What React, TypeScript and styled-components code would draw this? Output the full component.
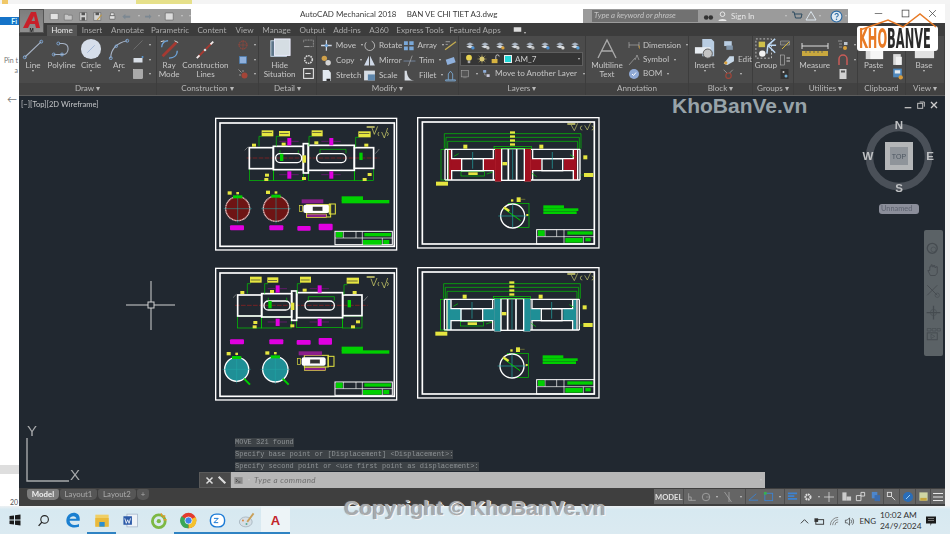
import React from "react";
import styled, { createGlobalStyle } from "styled-components";

const Global = createGlobalStyle`
  html, body { margin: 0; padding: 0; background: #f0f0f0; }
  * { box-sizing: border-box; }
`;
const UI = `Lato, Roboto, "Liberation Sans", sans-serif`;

const Root = styled.div`
  position: relative; width: 950px; height: 534px; overflow: hidden; display: flex; flex-direction: column;
  background: #f1f1f1; font-family: ${UI};
`;
const TopStrip = styled.div`
  height: 4px; display: flex; background: #f4f4f4;
`;
const TopFolder = styled.span`width: 6px; height: 4px; margin-left: 2px; background: #f0c868;`;
const TopMark = styled.span`width: 56px; height: 4px; margin-left: 128px; background: #e6e08a;`;
const Middle = styled.div`height: 502px; display: flex;`;
const LeftStrip = styled.div`
  width: 19px; display: flex; flex-direction: column; background: #fff; color: #666; font-size: 7px; padding-top: 13px;
`;
const FileTab = styled.div`
  height: 8px; background: #1573c8; color: #dff; font-weight: 700; line-height: 8px; font-size: 7px; text-align: right; padding-right: 2px;
`;
const PinText = styled.div`margin-top: 30px; line-height: 10px; text-align: right; padding-right: 1px; color: #777; height: 20px;`;
const BackArrow = styled.div`margin-top: 18px; padding-left: 7px; height: 12px; color: #777; font-size: 10px; line-height: 12px;`;
const LeftSelected = styled.div`margin-top: 360px; height: 11px; background: #dedede;`;
const LeftYear = styled.div`margin-top: 24px; text-align: right; padding-right: 1px; color: #555; font-size: 7px; line-height: 8px;`;
const RightStrip = styled.div`flex: 1; background: #f3f3f3;`;

const AppWindow = styled.div`
  position: relative; width: 926px; display: flex; flex-direction: column; background: #3f3f3f;
  filter: blur(0.35px);
`;
const TitleBar = styled.div`
  height: 19px; background: #fff; display: flex; padding-top: 5px; color: #333;
`;
const QuickBar = styled.div`
  margin-left: 25px; width: 147px; height: 14px; background: #999; display: flex; align-items: center; gap: 4px; padding-left: 5px;
`;
const TitleText = styled.div`
  margin-left: 109px; width: 283px; font-size: 8px; line-height: 11px; white-space: pre; color: #3a3a3a;
`;
const InfoCenter = styled.div`
  width: 265px; height: 14px; background: #9b9b9b; display: flex; align-items: center; color: #e6e6e6; font-size: 8px;
`;
const SearchBox = styled.div`
  margin-left: 9px; width: 106px; height: 12px; background: #717171; color: #c4c4c4; font-style: italic; padding-left: 2px; line-height: 11px; font-size: 7.8px; white-space: nowrap;
`;
const InfoItem = styled.span<{ $ml?: number }>`
  margin-left: ${(p) => p.$ml ?? 4}px; display: inline-flex; align-items: center; flex: none; white-space: nowrap;
`;
const WindowButtons = styled.div`
  flex: 1; display: flex; justify-content: flex-end; gap: 18px; padding: 0 8px 0 0; color: #444; align-items: flex-start;
`;
const AppButton = styled.div`
  position: absolute; left: 0; top: 5px; width: 25px; height: 24px; background: linear-gradient(#7d7d7d, #8f8f8f); border: 1px solid #555;
  display: flex; flex-direction: column; align-items: center; justify-content: flex-start;
  svg { margin-top: 1px; }
  span { font: 700 5px/4px "Liberation Sans", sans-serif; color: #222; }
`;
const TabRow = styled.div`
  height: 13px; background: #3c3c3c; display: flex; padding-left: 28px; align-items: flex-end;
`;
const Tab = styled.div<{ $active?: boolean; $w: number }>`
  width: ${(p) => p.$w}px; height: 11px; line-height: 10px; font-size: 8.1px; text-align: center; white-space: nowrap;
  color: ${(p) => (p.$active ? "#e8e8e8" : "#a9a9a9")}; background: ${(p) => (p.$active ? "#555" : "transparent")};
`;
const Ribbon = styled.div`
  height: 60px; display: flex; background: #4b4b4b; border-bottom: 1px solid #5c5c5c;
`;
const Panel = styled.div<{ $w: number }>`
  width: ${(p) => p.$w}px; display: flex; flex-direction: column; border-right: 1px solid #3d3d3d;
`;
const PanelBody = styled.div`
  flex: 1; display: flex; padding-top: 2px; color: #c6c6c6; font-size: 8.1px; line-height: 9px;
`;
const PanelTitle = styled.div`
  height: 12px; background: #424242; color: #b8b8b8; font-size: 8.1px; line-height: 11px; text-align: center; white-space: nowrap;
`;
const Large = styled.div<{ $w: number }>`
  width: ${(p) => p.$w}px; display: flex; flex-direction: column; align-items: center; text-align: center; white-space: pre-line; color: #c6c6c6;
  svg { margin-bottom: 1px; flex: none; }
`;
const Dot = styled.span`
  display: block; margin: 0 auto; border-top: 2px solid #c8c8c8; border-left: 1.5px solid transparent; border-right: 1.5px solid transparent; height: 0; width: 0;
`;
const SmallCol = styled.div<{ $w?: number; $ml?: number }>`
  width: ${(p) => p.$w ?? 22}px; margin-left: ${(p) => p.$ml ?? 0}px; display: flex; flex-direction: column;
`;
const SmallRow = styled.div<{ $gap?: number }>`
  height: 14.4px; display: flex; align-items: center; gap: ${(p) => p.$gap ?? 3}px; white-space: nowrap; color: #c6c6c6;
`;
const Caret = styled.span`
  display: inline-block; width: 0; height: 0; border-top: 2px solid #c8c8c8; border-left: 1.5px solid transparent; border-right: 1.5px solid transparent; margin-left: 2px;
`;
const ModifyGrid = styled.div`
  display: grid; grid-template-columns: 43px 40px 41px 14px; padding-left: 3px;
`;
const LayersBox = styled.div`
  padding: 0 0 0 1px; display: flex; flex-direction: column; width: 100%;
`;
const LayerIcons = styled.div`
  height: 14.4px; display: flex; gap: 5px; padding-left: 5px; align-items: center;
`;
const Combo = styled.div`
  height: 14px; width: 123px; background: #353535; border: 1px solid #5f5f5f; display: flex; align-items: center; gap: 3px; padding: 0 2px 0 3px; color: #cdcdcd; font-size: 8.1px;
`;
const Swatch = styled.span`width: 8px; height: 8px; background: #22d7d7; border: 1px solid #eee; margin-left: 1px;`;
const ComboText = styled.span`flex: 1;`;

const Viewport = styled.div`
  position: relative; height: 392px; background: #212830; overflow: hidden;
`;
const Canvas = styled.svg`
  position: absolute; left: 0; top: 0; width: 926px; height: 392px; fill: none;
`;
const VpLabel = styled.div`
  position: absolute; left: 2px; top: 3px; color: #c4c6c8; font-size: 7.6px; line-height: 10px;
`;
const VpControls = styled.div`
  position: absolute; right: 7px; top: 5px; display: flex; gap: 5px;
`;
const Pill = styled.div`
  position: absolute; left: 860px; top: 108px; width: 40px; height: 10px; border-radius: 3px; background: #8b8e9a; color: #5e6370; font-size: 7.4px; line-height: 9px; padding-left: 2px;
`;
const NavBar = styled.div`
  position: absolute; left: 905px; top: 134px; width: 19px; height: 126px; background: #5b6266; border-radius: 2px; display: flex; flex-direction: column; align-items: center; padding-top: 12px; gap: 6px;
`;
const History = styled.div`
  position: absolute; left: 216px; top: 342px; display: flex; flex-direction: column; gap: 3px; align-items: flex-start;
  font: 7px/9px "Liberation Mono", monospace; color: #8d9295;
`;
const HistoryLine = styled.span`
  background: #3d4246; height: 9px; white-space: pre;
`;
const CommandBar = styled.div`
  position: absolute; left: 180px; bottom: 0; width: 566px; height: 16px; display: flex; background: #b7b7b7;
`;
const CommandHandle = styled.div`
  width: 32px; background: #4a4a4a; border: 1px solid #5a5a5a; display: flex; align-items: center; justify-content: flex-end; gap: 3px; padding-right: 3px; color: #ddd;
`;
const CommandInput = styled.div`
  flex: 1; display: flex; align-items: center; padding: 0 3px; gap: 3px; color: #6d6d6d; font-style: italic; font-size: 8px;
`;
const CommandText = styled.span`flex: 1; margin-left: 1px; letter-spacing: .4px;`;

const StatusRow = styled.div`
  flex: 1; display: flex; background: #3f3f3f; align-items: flex-start; padding-top: 1px;
`;
const LayoutTabs = styled.div`
  padding-left: 8px; display: flex; gap: 1px; width: 635px;
`;
const LayoutTab = styled.div<{ $active?: boolean; $w: number }>`
  width: ${(p) => p.$w}px; height: 11px; line-height: 10px; text-align: center; font-size: 7.8px; border-radius: 2px 2px 5px 5px;
  background: ${(p) => (p.$active ? "#7d7d7d" : "#565656")}; color: ${(p) => (p.$active ? "#f0f0f0" : "#aaa")}; font-weight: ${(p) => (p.$active ? 700 : 400)};
`;
const StatusCluster = styled.div`
  width: 291px; height: 15px; display: flex; gap: 1px; background: #4e4e4e;
`;
const StatusGroup = styled.div<{ $w: number }>`
  width: ${(p) => p.$w}px; background: #656565; display: flex; align-items: center; justify-content: space-around; padding: 0 1px; color: #e0e0e0; font-size: 7.6px; font-weight: 700;
`;
const Taskbar = styled.div`
  height: 28px; display: flex; background: linear-gradient(#edf1f3, #d7e9f1 12%, #dbeaf1);
`;
const TaskItem = styled.div<{ $active?: boolean; $open?: boolean }>`
  width: 29px; height: 100%; display: flex; align-items: center; justify-content: center; padding-top: 2px;
  background: ${(p) => (p.$active ? "#edf4f7" : "transparent")}; border-bottom: 2px solid ${(p) => (p.$open ? "#2f83c3" : "transparent")};
  color: #c3242b; font: 700 13px "Liberation Sans", sans-serif;
`;
const Tray = styled.div`
  margin-left: auto; display: flex; align-items: center; gap: 4px; padding-right: 13px; color: #333; font-size: 8px; padding-top: 2px;
`;
const Clock = styled.div`
  width: 36px; margin: 0 5px 0 0; line-height: 11px; text-align: center; font-size: 8.4px; white-space: nowrap;
`;
const SiteMark = styled.div`
  position: absolute; left: 672px; top: 94px; font: 700 21px/23px "Liberation Sans", sans-serif; color: #98a3a9; white-space: nowrap;
`;
const Copyright = styled.div`
  position: absolute; left: 344px; top: 496px; font: 700 21px/23px "Liberation Sans", sans-serif; color: #a8aaac; white-space: nowrap; text-shadow: 1px 1px 0 #f4f4f4, -.5px 0 1px #8a8a8a;
`;
const Logo = styled.div`
  position: absolute; left: 857px; top: 12px; width: 82px; height: 38px;
`;
const Roof = styled.svg`
  position: absolute; left: 0; top: 0; width: 82px; height: 20px; z-index: 1;
`;
const LogoPlate = styled.div`
  position: absolute; left: 0; top: 14px; width: 81px; height: 25px; background: #fff; border-radius: 3px;
`;
const LogoWord = styled.div`
  width: 160px; white-space: nowrap; transform: scaleX(.47); transform-origin: left top; margin-left: 2px;
  font: 700 27px/25px "DejaVu Sans Condensed", "DejaVu Sans", sans-serif;
`;
const LogoSpan = styled.span<{ $c: string }>`color: ${(p) => p.$c};`;

/* ---------- icons ---------- */
const S = ({ s = 12, v = 24, children }: { s?: number; v?: number; children: React.ReactNode }) => (
  <svg width={s} height={s} viewBox={`0 0 ${v} ${v}`} fill="none">{children}</svg>
);
const BL = "#a8b4c6";
const LineIc = () => <S s={22}><path d="M3 21 21 4" stroke={BL} strokeWidth="1.2"/><circle cx="3" cy="21" r="1.6" stroke="#7fa9d8"/><circle cx="21" cy="4" r="1.6" stroke="#7fa9d8"/></S>;
const PolyIc = () => <S s={22}><path d="M3 18H13C20 18 21 6 13 6H9" stroke={BL} strokeWidth="1.2"/><circle cx="3" cy="18" r="1.6" stroke="#7fa9d8"/><circle cx="12" cy="18" r="1.6" stroke="#7fa9d8"/><circle cx="8" cy="6" r="1.6" stroke="#7fa9d8"/></S>;
const CircleIc = () => <S s={22}><circle cx="12" cy="12" r="11" fill="#d6deea"/><path d="M8 16 16 8" stroke="#9cb4d4"/></S>;
const ArcIc = () => <S s={22}><path d="M3 22C3 12 10 5 21 3" stroke={BL} strokeWidth="1.2"/><circle cx="3" cy="22" r="1.6" stroke="#7fa9d8"/><circle cx="9" cy="9" r="1.4" stroke="#7fa9d8"/><circle cx="21" cy="3" r="1.6" stroke="#7fa9d8"/></S>;
const RayIc = () => <S s={22}><path d="M5 20 20 5" stroke="#a53a32" strokeWidth="3"/><path d="M4 10C4 5 8 3 11 3M21 14C21 20 16 22 12 22" stroke="#6ea4da" strokeWidth="1.4"/><path d="M3 4 7 3M18 3l4 2" stroke="#e2e2e2"/></S>;
const ConsIc = () => <S s={22}><path d="M4 21 20 5" stroke="#a53a32" strokeWidth="2"/><path d="M3 22 6 19M18 7l3-3" stroke="#eee" strokeWidth="2"/><circle cx="12" cy="13" r="1.4" fill="#ddd"/></S>;
const HideIc = () => <S s={22}><rect x="2" y="3" width="17" height="17" fill="#5e7689" stroke="#c9dbe8"/><rect x="6" y="1" width="17" height="18" fill="#d5dde3" stroke="#eef"/></S>;
const InsertIc = () => <S s={22}><path d="M9 1h10l3 3v16H9z" fill="#b9cde2"/><rect x="1" y="10" width="17" height="7" fill="#e7ecf1"/><circle cx="15" cy="17" r="5" fill="#c4c4c4" stroke="#555"/></S>;
const GroupIc = () => <S s={22}><rect x="1" y="1" width="17" height="21" stroke="#c8c8c8" strokeDasharray="2 2"/><rect x="4" y="4" width="7" height="6" fill="#cfc04a"/><path d="M14 8 22 1M14 8l9 0M14 8 22 16M14 8l-1 9" stroke="#bcd8f4" strokeWidth="1.6"/><circle cx="8" cy="17" r="3.5" fill="#f2f2f2"/></S>;
const MeasureIc = () => <svg width="30" height="22" viewBox="0 0 30 22" fill="none"><path d="M2 8h26M2 5v6M28 5v6" stroke="#ddd"/><rect x="2" y="13" width="26" height="5" fill="#c9a83e"/><path d="M6 13v2M10 13v2M14 13v2M18 13v2M22 13v2" stroke="#665"/></svg>;
const PasteIc = () => <S s={22}><rect x="3" y="3" width="16" height="20" fill="#d8d8d8"/><rect x="8" y="6" width="14" height="17" fill="#f6f6f6"/></S>;
const BaseIc = () => <S s={22}><rect x="2" y="3" width="21" height="19" fill="#e2e2e2"/></S>;
const MTextIc = () => <svg width="24" height="22" viewBox="0 0 24 22" fill="none"><path d="M3 20 12 2l9 18M6.5 13h11" stroke="#ababab" strokeWidth="1.3"/></svg>;
const AcadLogo = () => <svg width="18" height="17" viewBox="0 0 18 17"><path d="M0 17 8 1h5l4 16h-4l-1-4H7l-2 4zM8.5 10H12l-1-5z" fill="#c8202a"/></svg>;

const sm = {
  line: <S><path d="M3 21 21 3" stroke="#8d8d8d"/></S>,
  rect: <S><rect x="3" y="8" width="18" height="9" fill="#d8dee6"/><circle cx="21" cy="6" r="2" fill="#5c9ad6"/></S>,
  hatch: <S><rect x="3" y="3" width="18" height="18" fill="#a9a9a9" stroke="#d5d5d5"/></S>,
  blue: <S><rect x="5" y="5" width="14" height="14" fill="#8fb0dc" stroke="#3d7fc0"/></S>,
  red: <S><circle cx="12" cy="12" r="8" stroke="#a44538" strokeWidth="2" strokeDasharray="3 1"/><path d="M3 12h18M12 3v18" stroke="#a44538"/></S>,
  redDot: <S><circle cx="15" cy="15" r="6" fill="#a44538"/><path d="M3 3l6 6M4 14h4M12 4v4" stroke="#ddd"/></S>,
  rotate: <S s={13}><path d="M6 6a9 9 0 1 0 10-2" stroke="#d4d4d4" strokeWidth="1.4"/></S>,
  move: <S s={13}><path d="M12 2v20M2 12h20" stroke="#cfd8e6" strokeWidth="2.4"/><circle cx="12" cy="12" r="3" fill="#6ea4da"/></S>,
  copy: <S s={13}><circle cx="8" cy="8" r="5" fill="#cfa04a"/><circle cx="15" cy="16" r="5" fill="#d5d5d5"/></S>,
  mirror: <S s={13}><path d="M11 3v18H2zM13 3v18h9z" fill="#cfd8e6"/></S>,
  stretch: <S s={13}><path d="M5 2h11l4 5v15H5z" fill="#e2e8ef"/><path d="M12 18h7v4h-7z" fill="#222"/></S>,
  scale: <S s={13}><rect x="2" y="3" width="20" height="18" fill="#d6dde5"/><rect x="9" y="10" width="13" height="11" fill="#5d86ac"/></S>,
  array: <S s={13}><path d="M2 3h8v8H2zM13 3h9v8h-9zM2 14h8v8H2zM13 14h9v8h-9z" fill="#7aa8d8"/></S>,
  trim: <S s={13}><path d="M1 13h22" stroke="#8fb0dc"/><path d="M10 22 17 3" stroke="#c9c9c9"/></S>,
  fillet: <S s={13}><path d="M3 3v18h18C12 21 7 12 7 3z" fill="#d8dde4"/></S>,
  pen: <S s={13}><path d="M2 20 22 5" stroke="#c5ad50" strokeWidth="2.4"/><path d="M3 5h8M3 10h4" stroke="#ddd"/></S>,
  chamfer: <S s={13}><rect x="4" y="8" width="16" height="10" fill="#8fb0dc" transform="rotate(-18 12 12)"/></S>,
  base: <S s={13}><path d="M3 20h18v2H3zM8 20V9l4-5 4 5v11" stroke="#7fb0de" strokeWidth="1.5"/></S>,
  stack: (c: string) => <S s={10}><path d="M3 16l9-4 9 4-9 4z" fill="#d7dde4"/><path d="M3 10l9-4 9 4-9 4z" fill="#a9b4c2"/><circle cx="19" cy="19" r="4" fill={c}/></S>,
  square: <S s={14}><rect x="3" y="4" width="18" height="15" fill="#555" stroke="#aaa" strokeWidth="1.4"/><path d="M8 21h8" stroke="#aaa"/></S>,
  moveLayer: <S s={13}><rect x="3" y="3" width="8" height="7" fill="#8fb0dc"/><rect x="12" y="14" width="8" height="7" fill="#ccd"/><path d="M7 10v6h5" stroke="#ddd"/></S>,
  dim: <S s={12}><path d="M2 6v12M22 6v12M2 12h20" stroke="#cfcfcf"/><path d="M20 14h3v6" stroke="#d8a030"/></S>,
  sym: <S s={12}><path d="M2 22 14 8" stroke="#ccc"/><path d="M14 12 18 2l4 10" stroke="#ccc"/></S>,
  bom: <S s={12}><circle cx="12" cy="12" r="10" fill="#8fa9d6"/><path d="M8 12l3 3 5-6" stroke="#fff" strokeWidth="2"/></S>,
  block1: <S s={13}><rect x="4" y="4" width="14" height="9" fill="#b9cde2"/><rect x="8" y="12" width="12" height="8" fill="#8296aa"/></S>,
  block2: <S s={13}><path d="M3 20 14 6h8v9L10 22z" fill="#c7d8e8"/><circle cx="7" cy="18" r="3" fill="#d9a13c"/></S>,
  block3: <S s={13}><path d="M3 5l6 6M20 5l-6 6" stroke="#ccc"/><circle cx="12" cy="16" r="5" stroke="#a44538" strokeWidth="2"/></S>,
  grp1: <S s={12}><path d="M3 4h18v8H3z" fill="#585858" stroke="#bbb"/><path d="M6 20 20 6" stroke="#d3b63e" strokeWidth="2"/></S>,
  grp2: <S s={12}><rect x="3" y="2" width="8" height="20" stroke="#cfcfcf"/><path d="M15 8h7M15 14h7" stroke="#cfcfcf" strokeWidth="2"/></S>,
  grp3: <S s={12}><rect x="3" y="2" width="16" height="20" fill="#333"/><circle cx="9" cy="8" r="2" fill="#d3d3d3"/><circle cx="14" cy="16" r="3" fill="#74b1d8"/></S>,
  util1: <S s={12}><path d="M4 10h6M4 16h6M2 4h8" stroke="#ddd"/><path d="M14 6h7v6h-7z" fill="#bdc6d0"/><circle cx="16" cy="18" r="4" fill="#d7a13a"/></S>,
  magnet: <S s={12}><path d="M4 22V10a8 8 0 0 1 16 0v12" stroke="#c95c58" strokeWidth="3"/></S>,
  calc: <S s={12}><rect x="5" y="2" width="14" height="20" fill="#d2d2d2"/><rect x="8" y="5" width="8" height="4" fill="#555"/></S>,
  clip: <S s={13}><rect x="4" y="2" width="14" height="20" fill="#d8d8d8"/><rect x="9" y="7" width="11" height="15" fill="#f0f0f0"/></S>,
  clip2: <S s={13}><rect x="4" y="3" width="16" height="16" fill="#4f88bd"/><rect x="7" y="6" width="10" height="6" fill="#e4eaf0"/><circle cx="18" cy="19" r="4" fill="#d79a3a"/></S>,
  txt: <S s={13}><path d="M3 6V2h18v12h-6" stroke="#cfcfcf" strokeDasharray="2 1"/><path d="M4 14h10" stroke="#eee"/></S>,
  gear: <S s={13}><circle cx="12" cy="12" r="7" stroke="#d4d4d4" strokeWidth="3" strokeDasharray="3 1.5"/></S>,
  lineSq: <S s={13}><rect x="3" y="3" width="18" height="18" stroke="#e6e6e6" strokeWidth="2"/><path d="M6 12h10" stroke="#e6e6e6" strokeWidth="2"/></S>,
};

const Q = (c: React.ReactNode, k: number) => <React.Fragment key={k}>{c}</React.Fragment>;
const quick = [
  <path d="M3 5h18v14H3z" fill="#e2e2e2" stroke="#555"/>,
  <path d="M3 7h7l2 2h9v11H3z" fill="#c6c6c6" stroke="#555"/>,
  <g><path d="M4 3h16v18H4z" fill="#d2d2d2" stroke="#444"/><path d="M8 3h8v6H8zM8 14h8v7H8z" fill="#555"/></g>,
  <g><path d="M4 3h16v18H4z" fill="#d2d2d2" stroke="#444"/><path d="M8 3h8v6H8z" fill="#555"/><path d="M12 20 22 8" stroke="#c89b3a" strokeWidth="2.4"/></g>,
  <path d="M6 10h12v8H6zM8 4h8v6H8z" fill="#e2e2e2" stroke="#444"/>,
  <path d="M3 12 10 6v4h11v5H10v4z" fill="#7c8892"/>,
];

const LARGE = (w: number, icon: React.ReactNode, label: string, caret = true) => (
  <Large $w={w}>{icon}{label}{caret && <Dot />}</Large>
);
const Stack = ({ items, w, ml }: { items: React.ReactNode[]; w?: number; ml?: number }) => (
  <SmallCol $w={w} $ml={ml}>{items.map((it, i) => <SmallRow key={i}>{it}</SmallRow>)}</SmallCol>
);
const Sm = ({ i, t, c = true }: { i: React.ReactNode; t?: string; c?: boolean }) => (
  <SmallRow>{i}{t}{c && <Caret />}</SmallRow>
);

/* ---------- drawings ---------- */
const GR = "#00d000", YE = "#e6e640", WH = "#fff", MA = "#e000e0", CY = "#22a9a9";

const ShaftSheet = ({ dx, dy, shaftX, teal }: { dx: number; dy: number; shaftX: number; teal?: boolean }) => {
  const o = shaftX;
  const fill = teal ? "#1f8f96" : "#6e1414";
  const circY = teal ? 322 : 290;
  const ty = teal ? -8 : 0;
  const circX1 = teal ? 80 : 83, circX2 = teal ? 196 : 198;
  return (
    <g transform={`translate(${dx} ${dy}) scale(.3333)`} fill="none">
      <rect x="17" y="19" width="543" height="395" stroke={WH} strokeWidth="4"/>
      <rect x="30" y="33" width="523" height="370" stroke={WH} strokeWidth="5"/>
      <path d={`M${o - 8} ${138 + ty}H${o + 390}`} stroke="#a02020" strokeWidth="2" strokeDasharray="14 4"/>
      {[[0,170,72,36],[72,173,90,33],[177,175,138,30],[315,170,58,36]].map(([x,y,w,h],i)=>(
        <rect key={i} x={o+x} y={y+ty} width={w} height={h} stroke={GR} strokeWidth="2"/>
      ))}
      {[[0,107,72,63],[72,103,90,70],[162,95,15,88],[177,100,138,75],[315,107,58,62]].map(([x,y,w,h],i)=>(
        <rect key={i} x={o+x} y={y+ty} width={w} height={h} stroke={WH} strokeWidth="5"/>
      ))}
      <rect x={o+79} y={125+ty} width="78" height="27" rx="13" stroke={WH} strokeWidth="4"/>
      <rect x={o+202} y={125+ty} width="88" height="27" rx="13" stroke={WH} strokeWidth="4"/>
      <path d={`M${o+92} ${115+ty}v8M${o+147} ${115+ty}v8M${o+212} ${112+ty}h78M${o+212} ${112+ty}v12M${o+290} ${112+ty}v12`} stroke={GR} strokeWidth="2"/>
      {[[92,125],[330,122],[160,130]].map(([x,y],i)=><rect key={i} x={o+x} y={y+ty} width="10" height="22" fill={i===2?YE:GR}/>)}
      {[[37,55,35,18],[89,57,33,16],[187,55,33,18],[327,58,37,18]].map(([x,y,w,h],i)=>(
        <g key={i}>
          <rect x={o+x} y={y+ty-(teal?3:0)} width={w} height={h} fill={YE}/>
          <path d={`M${o+x+2} ${y+h+ty}H${o+x-8}V${y+h+30+ty}`} stroke={GR} strokeWidth="2"/>
          <rect x={o+x+2} y={y+6+ty} width={w-6} height="2" fill="#333"/>
        </g>
      ))}
      {[[114,78],[114,178],[240,78],[240,178]].map(([x,y],i)=>(
        <g key={i}>
          <rect x={o+x} y={y+ty} width="12" height="22" fill={MA}/>
          <path d={`M${o+x+12} ${y+10+ty}h22M${o+x-2} ${y+10+ty}h-22`} stroke={MA} strokeWidth="1"/>
        </g>
      ))}
      {[[8,95],[97,92],[195,88],[345,95],[47,185],[45,198],[158,195],[355,183],[340,198]].map(([x,y],i)=>(
        <rect key={i} x={o+x} y={y+ty} width="12" height="9" fill={YE}/>
      ))}
      <path d={`M${o-14} ${115+ty} ${o-4} ${105+ty}M${o+378} ${125+ty}l12-14`} stroke="#999" strokeWidth="2"/>
      <path d={`M${teal?483:485} ${teal?50:45}l8 22 10-24 M507 60a8 8 0 0 0 0 12M532 60a8 8 0 0 1 0 12M515 60l8 18 10-30`} stroke="#e0e070" strokeWidth="2"/>
      <rect x="470" y="42" width="24" height="6" fill="#a7a760"/>
      {[circX1, circX2].map((x, i) => {
        const r = i === 0 ? 36 : 38;
        return (
          <g key={i}>
            <circle cx={x} cy={circY} r={r} fill={fill} stroke={teal ? WH : "#e6b8b8"} strokeWidth="4" strokeDasharray={teal ? undefined : "4 1"}/>
            <path d={`M${x - r - 6} ${circY}h${2 * r + 12}M${x} ${circY - r - 6}v${2 * r + 12}`} stroke={CY} strokeWidth="1.6"/>
            <rect x={x - 14} y={circY - r - 4} width="28" height="9" fill={GR}/>
            <rect x={x - 30} y={circY - r - 16} width="12" height="10" fill={YE}/>
            <rect x={x - 4} y={circY - r - 14} width="8" height="7" fill={YE}/>
            {teal && <path d={`M${x + 22} ${circY + 28}l18 18`} stroke={GR} strokeWidth="6"/>}
          </g>
        );
      })}
      <rect x={teal?283:290} y={teal?280:278} width="72" height={teal?35:37} stroke={YE} strokeWidth="3"/>
      <rect x={teal?266:275} y={teal?268:262} width={teal?70:65} height="12" fill="#8a1f8a"/>
      <rect x={teal?284:290} y={teal?316:306} width={teal?62:60} height="10" fill="#8a1f8a" stroke={YE} strokeWidth="2"/>
      <rect x={teal?275:280} y={teal?286:278} width={teal?72:78} height="25" rx="6" fill={WH}/>
      <rect x={teal?300:308} y={teal?292:284} width="30" height="13" fill="#333" stroke={WH}/>
      <rect x={teal?354:358} y={teal?283:276} width="18" height="30" stroke={YE} strokeWidth="3"/>
      <rect x={teal?262:268} y={teal?290:280} width="10" height="18" stroke={YE} strokeWidth="2"/>
      <rect x="395" y={teal?254:253} width="64" height="13" fill={GR}/>
      <rect x="395" y={teal?265:264} width="143" height="10" fill={GR}/>
      {(teal ? [[60,232,42,15],[178,232,42,15],[260,234,42,14],[326,228,40,20]] : [[60,340,42,15],[178,340,42,15],[262,342,40,14],[326,335,42,20]]).map(([x,y,w,h],i)=>(
        <rect key={i} x={x} y={y} width={w} height={h} rx="3" fill={MA}/>
      ))}
      <rect x="375" y={teal?360:358} width="172" height="40" stroke={WH} strokeWidth="3"/>
      <path d={`M375 ${teal?380:378}H547M400 ${teal?360:358}v20M438 ${teal?360:358}v20M457 ${teal?360:358}v40M517 ${teal?380:378}v20`} stroke={WH} strokeWidth="2"/>
      <rect x="378" y={teal?362:360} width="20" height="16" fill={GR}/>
      <rect x="463" y={teal?364:363} width="80" height="10" fill={GR}/>
      <rect x="459" y="384" width="56" height="14" fill={GR}/>
      <rect x="520" y="384" width="18" height="12" fill={GR}/>
    </g>
  );
};

const GearSheet = ({ dx, dy, teal, ox = 0 }: { dx: number; dy: number; teal?: boolean; ox?: number }) => {
  const f = teal ? "#1f8f96" : "#a01020";
  return (
    <g transform={`translate(${dx} ${dy}) scale(.3333)`} fill="none">
      <rect x="23" y="17" width="544" height="391" stroke={WH} strokeWidth="4"/>
      <rect x="37" y="30" width="516" height="366" stroke={WH} strokeWidth="5"/>
      <g transform={`translate(${ox} 0)`}>
        <path d="M103 110V65H513V110M108 110V76H508V110M113 110V88H503V110" stroke={GR} strokeWidth="2"/>
        <rect x="93" y="112" width="22" height="92" stroke={GR} strokeWidth="2"/>
        <rect x="153" y="178" width="70" height="14" stroke={GR} strokeWidth="2"/>
        <rect x="175" y="181" width="28" height="8" fill={YE}/>
        <rect x="255" y="110" width="20" height="98" fill={f} stroke={teal ? WH : "#ff6a6a"}/>
        <rect x="343" y="110" width="20" height="98" fill={f} stroke={teal ? WH : "#ff6a6a"}/>
        {[[120,140,36,36],[222,140,34,36],[363,140,30,36],[462,140,36,36],[116,112,8,92],[492,112,8,92]].map(([x,y,w,h],i)=>(
          <rect key={i} x={x} y={y} width={w} height={h} fill={f}/>
        ))}
        <path d="M105 112H255M363 112H510M105 204H255M363 204H510M105 112V204M510 112V204M113 112V204M503 112V204" stroke={WH} strokeWidth="4"/>
        <path d="M125 112V140H250V112M368 112V140H490V112M125 204V176H250V204M368 204V176H490V204" stroke={WH} strokeWidth="4"/>
        <rect x="155" y="140" width="65" height="36" stroke={WH} strokeWidth="4"/>
        <rect x="396" y="140" width="62" height="36" stroke={WH} strokeWidth="4"/>
        <rect x="275" y="110" width="68" height="95" stroke={WH} strokeWidth="4"/>
        <path d="M295 110V205M320 110V205" stroke={WH} strokeWidth="5"/>
        <path d="M188 120v50M427 120v50M308 112v90" stroke={CY} strokeWidth="2"/>
        <rect x="252" y="103" width="112" height="6" stroke={GR} strokeWidth="2"/>
        {[[300,58],[300,70],[300,82],[300,94]].map(([x,y],i)=><rect key={i} x={x} y={y} width="15" height="7" fill={YE}/>)}
        {[[160,98,12,12],[388,98,12,12],[520,130,12,12],[277,150,14,10]].map(([x,y,w,h],i)=><rect key={i} x={x} y={y} width={w} height={h} fill={YE}/>)}
        <path d="M132 133l14-8M480 128l14 8M230 186l18-6M366 184l14 10" stroke={GR} strokeWidth="2"/>
        <rect x="78" y="209" width="36" height="12" fill={YE}/>
        <rect x="522" y="183" width="28" height="12" fill={YE}/>
        <path d="M114 208 105 204M522 189H510" stroke={GR}/>
        <rect x="295" y="275" width="62" height="72" stroke={GR} strokeWidth="2"/>
        <circle cx="308" cy="312" r="36" fill="#212830" stroke={WH} strokeWidth="4"/>
        <path d="M265 312h88M308 278v68" stroke={CY} strokeWidth="2"/>
        <path d="M282 290l50 36" stroke={GR} strokeWidth="3"/>
        <rect x="280" y="288" width="20" height="7" fill={YE} transform="rotate(35 290 291)"/>
        <rect x="320" y="256" width="12" height="14" fill={YE}/><path d="M332 262h14" stroke={YE}/>
        <rect x="349" y="306" width="6" height="6" fill={YE}/>
        <rect x="303" y="262" width="7" height="7" fill={YE}/>
        <rect x="400" y="280" width="62" height="9" fill={GR}/>
        <rect x="400" y="289" width="105" height="8" fill={GR}/>
        <rect x="400" y="298" width="100" height="8" fill={GR}/>
      </g>
      <path d="M483 38l10 18 10-22M517 42a6 6 0 0 0 0 12M545 42a6 6 0 0 1 0 12M524 40l8 14 10-22" stroke="#c8c870" strokeWidth="2"/>
      <rect x="472" y="33" width="24" height="6" fill="#a7a760"/>
      <rect x="380" y="353" width="173" height="43" stroke={WH} strokeWidth="3"/>
      <path d="M380 374H553M405 353v21M440 353v21M462 353v43M520 374v22" stroke={WH} strokeWidth="2"/>
      <rect x="384" y="355" width="20" height="17" fill={GR}/>
      <rect x="472" y="358" width="76" height="10" fill={GR}/>
      <rect x="466" y="378" width="52" height="14" fill={GR}/>
      <rect x="526" y="378" width="16" height="10" fill={GR}/>
    </g>
  );
};

const Compass = ({ l, x, y }: { l: string; x: number; y: number }) => (
  <text x={x} y={y} fill="#bfc1c3" fontFamily="Liberation Sans" fontSize="11.5" fontWeight="700" textAnchor="middle">{l}</text>
);

const navIcon = (d: React.ReactNode) => <S s={15}>{d}</S>;

export default function App() {
  return (
    <Root>
      <Global />
      <TopStrip><TopFolder /><TopMark /></TopStrip>
      <Middle>
        <LeftStrip>
          <FileTab>Fi</FileTab>
          <PinText>Pin t<br />a</PinText>
          <BackArrow>←</BackArrow>
          <LeftSelected />
          <LeftYear>20</LeftYear>
        </LeftStrip>
        <AppWindow>
          <TitleBar>
            <QuickBar>
              {quick.map((q, i) => Q(<S s={11}>{q}</S>, i))}
              <Caret />
              <S s={9}><path d="M21 12 14 6v4H3v5h11v4z" fill="#7c8892"/></S>
              <Caret />
              <S s={11}><path d="M3 4h18v16H3z" fill="#dcdcdc" stroke="#444"/></S><Caret /><Caret />
            </QuickBar>
            <TitleText>{"AutoCAD Mechanical 2018     BAN VE CHI TIET A3.dwg"}</TitleText>
            <InfoCenter>
              <SearchBox>Type a keyword or phrase</SearchBox>
              <InfoItem $ml={5}><S s={11}><circle cx="7" cy="14" r="5" fill="#333"/><circle cx="17" cy="14" r="5" fill="#333"/></S></InfoItem>
              <InfoItem $ml={3}><S s={11}><circle cx="12" cy="7" r="5" stroke="#eee" strokeWidth="2"/><path d="M3 22c0-6 18-6 18 0z" fill="#e8e8e8"/></S></InfoItem>
              <InfoItem $ml={3}>Sign In</InfoItem>
              <InfoItem $ml={28}><Caret /></InfoItem>
              <InfoItem $ml={4}><S s={12}><path d="M2 4h4l3 12h11l2-8H7" stroke="#2d4b60" strokeWidth="2"/></S></InfoItem>
              <InfoItem $ml={2}><S s={12}><path d="M12 3 22 20H2z" stroke="#dce6ee" strokeWidth="2"/></S><Caret /></InfoItem>
              <InfoItem $ml={9}><S s={13}><circle cx="12" cy="12" r="10" fill="#dfe9f2" stroke="#2b6aa4" strokeWidth="2"/><circle cx="12" cy="17" r="1.4" fill="#2b6aa4"/><path d="M9 9c1-4 7-3 6 1-1 2-3 2-3 4" stroke="#2b6aa4" strokeWidth="2"/></S><Caret /></InfoItem>
            </InfoCenter>
            <WindowButtons>
              <S s={9}><path d="M2 12h20" stroke="#555" strokeWidth="2"/></S>
              <S s={9}><rect x="3" y="3" width="18" height="18" stroke="#444" strokeWidth="2"/></S>
              <S s={9}><path d="M3 3 21 21M21 3 3 21" stroke="#444" strokeWidth="2"/></S>
            </WindowButtons>
          </TitleBar>
          <AppButton><AcadLogo /><span>M</span></AppButton>
          <TabRow>
            <Tab $active $w={30}>Home</Tab>
            <Tab $w={30}>Insert</Tab>
            <Tab $w={41}>Annotate</Tab>
            <Tab $w={44}>Parametric</Tab>
            <Tab $w={40}>Content</Tab>
            <Tab $w={25}>View</Tab>
            <Tab $w={39}>Manage</Tab>
            <Tab $w={33}>Output</Tab>
            <Tab $w={36}>Add-ins</Tab>
            <Tab $w={28}>A360</Tab>
            <Tab $w={54}>Express Tools</Tab>
            <Tab $w={56}>Featured Apps</Tab>
            <Tab $w={32}><S s={9}><rect x="2" y="6" width="20" height="12" fill="#ddd"/></S><Caret /></Tab>
          </TabRow>
          <Ribbon>
            <Panel $w={138}>
              <PanelBody>
                {LARGE(28, <LineIc />, "Line")}
                {LARGE(29, <PolyIc />, "Polyline", false)}
                {LARGE(30, <CircleIc />, "Circle")}
                {LARGE(26, <ArcIc />, "Arc")}
                <Stack items={[<Sm i={sm.line} />, <Sm i={sm.rect} />, <Sm i={sm.hatch} />]} />
              </PanelBody>
              <PanelTitle>Draw ▾</PanelTitle>
            </Panel>
            <Panel $w={102}>
              <PanelBody>
                {LARGE(25, <RayIc />, "Ray\nMode", false)}
                {LARGE(50, <ConsIc />, "Construction\nLines", false)}
                <Stack ml={7} items={[<Sm i={sm.red} />, <Sm i={sm.blue} />, <Sm i={sm.redDot} />]} />
              </PanelBody>
              <PanelTitle>Construction ▾</PanelTitle>
            </Panel>
            <Panel $w={58}>
              <PanelBody>
                {LARGE(42, <HideIc />, "Hide\nSituation", false)}
                <Stack ml={2} items={[<Sm i={sm.txt} c={false} />, <Sm i={sm.gear} c={false} />, <Sm i={sm.lineSq} c={false} />]} w={14} />
              </PanelBody>
              <PanelTitle>Detail ▾</PanelTitle>
            </Panel>
            <Panel $w={142}>
              <PanelBody>
                <ModifyGrid>
                  <Sm i={sm.move} t="Move" /><Sm i={sm.rotate} t="Rotate" c={false} /><Sm i={sm.array} t="Array" /><Sm i={sm.pen} c={false} />
                  <Sm i={sm.copy} t="Copy" /><Sm i={sm.mirror} t="Mirror" c={false} /><Sm i={sm.trim} t="Trim" /><Sm i={sm.chamfer} c={false} />
                  <Sm i={sm.stretch} t="Stretch" c={false} /><Sm i={sm.scale} t="Scale" c={false} /><Sm i={sm.fillet} t="Fillet" /><Sm i={sm.base} c={false} />
                </ModifyGrid>
              </PanelBody>
              <PanelTitle>Modify ▾</PanelTitle>
            </Panel>
            <Panel $w={127}>
              <PanelBody>
                <LayersBox>
                  <LayerIcons>
                    {["#4d8fd0", "#c8c8c8", "#d9a13c", "#c8c8c8", "#bbb", "#4d8fd0", "#ddd", "#5aa0d8"].map((c, i) => Q(sm.stack(c), i))}
                  </LayerIcons>
                  <Combo>
                    <S s={10}><circle cx="12" cy="9" r="7" fill="#e8d350"/><rect x="9" y="16" width="6" height="6" fill="#aaa"/></S>
                    <S s={10}><circle cx="12" cy="12" r="6" fill="#d7c772"/><path d="M12 1v22M1 12h22M4 4l16 16M20 4 4 20" stroke="#d7c772"/></S>
                    <S s={10}><rect x="4" y="12" width="14" height="10" fill="#d7b340"/><path d="M14 12V6a4 4 0 0 1 8 0" stroke="#ddd" strokeWidth="2"/></S>
                    <Swatch />
                    <ComboText>AM_7</ComboText>
                    <Caret />
                  </Combo>
                  <SmallRow $gap={4}>
                    {sm.square}<Caret />
                    {sm.moveLayer}<span>Move to Another Layer</span><Caret />
                  </SmallRow>
                </LayersBox>
              </PanelBody>
              <PanelTitle>Layers ▾</PanelTitle>
            </Panel>
            <Panel $w={103}>
              <PanelBody>
                {LARGE(42, <MTextIc />, "Multiline\nText", false)}
                <Stack w={58} items={[<Sm i={sm.dim} t="Dimension" />, <Sm i={sm.sym} t="Symbol" />, <Sm i={sm.bom} t="BOM" />]} />
              </PanelBody>
              <PanelTitle>Annotation</PanelTitle>
            </Panel>
            <Panel $w={64}>
              <PanelBody>
                {LARGE(32, <InsertIc />, "Insert")}
                <Stack ml={2} w={30} items={[<Sm i={sm.block1} c={false} />, <Sm i={sm.block2} t="Edit" c={false} />, <Sm i={sm.block3} />]} />
              </PanelBody>
              <PanelTitle>Block ▾</PanelTitle>
            </Panel>
            <Panel $w={41}>
              <PanelBody>
                {LARGE(26, <GroupIc />, "Group", false)}
                <Stack w={14} items={[<Sm i={sm.grp1} c={false} />, <Sm i={sm.grp2} c={false} />, <Sm i={sm.grp3} c={false} />]} />
              </PanelBody>
              <PanelTitle>Groups ▾</PanelTitle>
            </Panel>
            <Panel $w={64}>
              <PanelBody>
                {LARGE(42, <MeasureIc />, "Measure")}
                <Stack ml={2} w={20} items={[<Sm i={sm.util1} />, <Sm i={sm.magnet} />, <Sm i={sm.calc} c={false} />]} />
              </PanelBody>
              <PanelTitle>Utilities ▾</PanelTitle>
            </Panel>
            <Panel $w={48}>
              <PanelBody>
                {LARGE(32, <PasteIc />, "Paste")}
                <Stack ml={2} w={14} items={[<Sm i={sm.clip} c={false} />, <Sm i={sm.clip} c={false} />, <Sm i={sm.clip2} c={false} />]} />
              </PanelBody>
              <PanelTitle>Clipboard</PanelTitle>
            </Panel>
            <Panel $w={39}>
              <PanelBody>
                {LARGE(36, <BaseIc />, "Base")}
              </PanelBody>
              <PanelTitle>View ▾</PanelTitle>
            </Panel>
          </Ribbon>
          <Viewport>
            <Canvas viewBox="19 96 926 392">
              <ShaftSheet dx={210} dy={112} shaftX={118} />
              <GearSheet dx={410} dy={112} />
              <ShaftSheet dx={210} dy={262} shaftX={83} teal />
              <GearSheet dx={410} dy={262} teal ox={-2} />
              <path d="M126 305H148M154 305H175M151 281V302M151 308V330" stroke="#d2d2d2"/>
              <rect x="148" y="302" width="6" height="6" stroke="#d2d2d2"/>
              <path d="M27 438V481H69" stroke="#a7a9ab" strokeWidth="1.4"/>
              <text x="27" y="436" fill="#a7a9ab" fontFamily="Liberation Sans" fontSize="15">Y</text>
              <text x="70" y="480" fill="#a7a9ab" fontFamily="Liberation Sans" fontSize="15">X</text>
              <circle cx="899" cy="157" r="29.5" stroke="#4a5058" strokeWidth="7.5" fill="none"/>
              <rect x="885" y="142" width="28" height="28" fill="#b4b6b8"/>
              <rect x="890" y="147" width="18" height="18" fill="#8f949a"/>
              <text x="899" y="159" fill="#4c5560" fontFamily="Liberation Sans" fontSize="7" textAnchor="middle">TOP</text>
              <Compass l="N" x={899} y={129} />
              <Compass l="S" x={899} y={192} />
              <Compass l="W" x={868} y={160} />
              <Compass l="E" x={930} y={160} />
            </Canvas>
            <VpLabel>[−][Top][2D Wireframe]</VpLabel>
            <VpControls>
              <S s={8}><path d="M2 20h20" stroke="#bbb" strokeWidth="4"/></S>
              <S s={8}><rect x="2" y="7" width="15" height="15" stroke="#bbb" strokeWidth="3"/><path d="M8 3h14v14" stroke="#bbb" strokeWidth="3"/></S>
              <S s={8}><path d="M3 3 21 21M21 3 3 21" stroke="#ccc" strokeWidth="4"/></S>
            </VpControls>
            <Pill>Unnamed</Pill>
            <NavBar>
              {navIcon(<><circle cx="10" cy="10" r="8" stroke="#454b50" strokeWidth="2"/><circle cx="12" cy="12" r="4" stroke="#454b50"/></>)}
              {navIcon(<path d="M7 20 3 12l3 0V6l2 0v-3h2v3h2v-2h2v3h2v-1h2v10l-3 4z" stroke="#454b50" strokeWidth="1.5"/>)}
              {navIcon(<><path d="M2 2 18 18M18 2 2 18" stroke="#454b50" strokeWidth="1.5"/><circle cx="18" cy="18" r="3.5" stroke="#454b50"/></>)}
              {navIcon(<><circle cx="12" cy="12" r="5" stroke="#454b50"/><path d="M12 1v22M1 12h22" stroke="#454b50" strokeWidth="2"/></>)}
              {navIcon(<><rect x="2" y="11" width="16" height="11" stroke="#454b50" strokeWidth="1.5"/><path d="M2 4h6v4H2zM10 4h6v4h-6zM18 4h5v4h-5zM8 13l6 3.5-6 3.5z" stroke="#454b50"/></>)}
            </NavBar>
            <History>
              <HistoryLine>MOVE 321 found</HistoryLine>
              <HistoryLine>{"Specify base point or [Displacement] <Displacement>:"}</HistoryLine>
              <HistoryLine>{"Specify second point or <use first point as displacement>:"}</HistoryLine>
            </History>
            <CommandBar>
              <CommandHandle>
                <S s={9}><path d="M4 4 20 20M20 4 4 20" stroke="#ddd" strokeWidth="4"/></S>
                <S s={10}><path d="M4 4 20 20" stroke="#ddd" strokeWidth="5"/></S>
              </CommandHandle>
              <CommandInput>
                <S s={9}><rect x="1" y="3" width="22" height="18" fill="#8c8c8c"/><path d="M5 8l4 4-4 4M11 16h6" stroke="#333" strokeWidth="2"/></S>
                <Caret />
                <CommandText>Type a command</CommandText>
                <Caret />
              </CommandInput>
            </CommandBar>
          </Viewport>
          <StatusRow>
            <LayoutTabs>
              <LayoutTab $active $w={32}>Model</LayoutTab>
              <LayoutTab $w={37}>Layout1</LayoutTab>
              <LayoutTab $w={38}>Layout2</LayoutTab>
              <LayoutTab $w={12}>+</LayoutTab>
            </LayoutTabs>
            <StatusCluster>
              <StatusGroup $w={29}>MODEL</StatusGroup>
              <StatusGroup $w={61}>
                <S s={10}><path d="M4 3v17h17M4 12h6v8" stroke="#bbb" strokeWidth="1.5"/></S>
                <S s={10}><circle cx="12" cy="12" r="9" stroke="#bbb" strokeWidth="1.5"/><path d="M12 12h9" stroke="#bbb"/></S><Caret />
                <S s={12}><path d="M5 2l14 20M14 2v20" stroke="#bbb" strokeWidth="1.2"/></S><Caret />
              </StatusGroup>
              <StatusGroup $w={38}>
                <S s={11}><path d="M2 20h20M2 20 18 6" stroke="#3c82d0" strokeWidth="2"/></S>
                <S s={11}><rect x="4" y="5" width="17" height="16" stroke="#3c82d0" strokeWidth="2"/><rect x="2" y="2" width="6" height="6" fill="#38b050"/></S><Caret />
              </StatusGroup>
              <StatusGroup $w={15}><S s={11}><path d="M2 5h20M2 11h14M2 17h20" stroke="#3c82d0" strokeWidth="4"/></S></StatusGroup>
              <StatusGroup $w={37}>
                <S s={10}><circle cx="12" cy="12" r="6" stroke="#ddd" strokeWidth="5" strokeDasharray="4 1.5"/></S><Caret />
                <S s={12}><path d="M12 2v20M2 12h20" stroke="#ddd" strokeWidth="1.5"/></S>
              </StatusGroup>
              <StatusGroup $w={45}>
                <S s={11}><rect x="3" y="3" width="9" height="18" fill="#ccc"/><rect x="12" y="12" width="10" height="9" fill="#ccc"/></S>
                <S s={11}><path d="M3 10h10v11H3zM13 3h8v8h-8z" stroke="#ddd" strokeWidth="2"/></S>
                <S s={11}><rect x="4" y="2" width="12" height="14" fill="#4d86cc"/><rect x="10" y="9" width="12" height="13" fill="#3b6db0"/></S>
              </StatusGroup>
              <StatusGroup $w={15}><S s={11}><rect x="3" y="3" width="9" height="9" stroke="#ddd" strokeWidth="2"/><path d="M12 12l8 8" stroke="#ddd" strokeWidth="2"/></S></StatusGroup>
              <StatusGroup $w={15}><S s={12}><circle cx="12" cy="12" r="10" fill="#2a6db8"/><path d="M8 16 16 8" stroke="#9fd0f4" strokeWidth="2"/></S></StatusGroup>
              <StatusGroup $w={14}><S s={11}><rect x="3" y="3" width="18" height="18" fill="#cfd6a4"/><path d="M5 15h14v6H5z" fill="#c7a73d"/></S></StatusGroup>
              <StatusGroup $w={14}><S s={12}><path d="M2 5h20M2 12h20M2 19h20" stroke="#e6e6e6" strokeWidth="2.4"/></S></StatusGroup>
            </StatusCluster>
          </StatusRow>
        </AppWindow>
        <RightStrip />
      </Middle>
      <Taskbar>
        <TaskItem><S s={12}><path d="M1 4 10 3v8H1zM12 2.5 23 1v10H12zM1 13h9v8l-9-1zM12 13h11v10l-11-1.5z" fill="#1a1a1a"/></S></TaskItem>
        <TaskItem><S s={13}><circle cx="14" cy="10" r="7" stroke="#222" strokeWidth="2"/><path d="M9 15 3 22" stroke="#222" strokeWidth="2.4"/></S></TaskItem>
        <TaskItem><S s={16}><path d="M22 13H7c0 6 8 8 14 5v4c-9 3-19 0-19-9C2 5 8 1 13 1c6 0 10 4 9 12zM7 10h10c0-5-9-5-10 0z" fill="#1a7fd0"/></S></TaskItem>
        <TaskItem $open><S s={16}><path d="M2 4h20v18H2z" fill="#f0cf66"/><path d="M2 9h20v13H2z" fill="#e9b93b"/><rect x="8" y="15" width="8" height="7" fill="#2d8fcf"/></S></TaskItem>
        <TaskItem><S s={17}><rect x="7" y="3" width="15" height="18" fill="#eef3f8" stroke="#9db0c6"/><rect x="2" y="6" width="12" height="12" fill="#2b5aa8"/><path d="M4 9l2 7 2-5 2 5 2-7" stroke="#fff" strokeWidth="1.2"/></S></TaskItem>
        <TaskItem><S s={17}><circle cx="11" cy="13" r="9" stroke="#7cb844" strokeWidth="4"/><circle cx="11" cy="13" r="3" fill="#7cb844"/><path d="M14 2l2 4M20 5l-3 3M22 11h-4" stroke="#e9962b" strokeWidth="2"/></S></TaskItem>
        <TaskItem $open><S s={17}><circle cx="12" cy="12" r="11" fill="#e33b2e"/><path d="M12 12 22 7A11 11 0 0 1 12 23z" fill="#f5c22b"/><path d="M12 12 12 23A11 11 0 0 1 2 6z" fill="#3aa757"/><circle cx="12" cy="12" r="5" fill="#3f83ea" stroke="#fff"/></S></TaskItem>
        <TaskItem $open><S s={17}><rect x="2" y="3" width="20" height="18" rx="8" fill="#fff" stroke="#1a7ad6" strokeWidth="2"/><path d="M7 9h6l-6 6h6" stroke="#1a7ad6" strokeWidth="1.4"/></S></TaskItem>
        <TaskItem $open><S s={17}><ellipse cx="11" cy="14" rx="9" ry="7" fill="#d5dfe6" stroke="#9caab4"/><circle cx="7" cy="12" r="1.4" fill="#d84"/><circle cx="12" cy="17" r="1.4" fill="#5a9"/><path d="M22 2 13 14" stroke="#c9a05a" strokeWidth="2.6"/></S></TaskItem>
        <TaskItem $active $open>A</TaskItem>
        <Tray>
          <S s={11}><path d="M4 16 12 8l8 8" stroke="#333" strokeWidth="2"/></S>
          <S s={11}><rect x="4" y="8" width="17" height="10" stroke="#333" strokeWidth="2"/><rect x="1" y="5" width="8" height="8" fill="#333"/></S>
          <S s={11}><path d="M3 20a17 17 0 0 1 17-17M8 20A12 12 0 0 1 20 8M13 20a7 7 0 0 1 7-7" stroke="#777" strokeWidth="1.8"/></S>
          <S s={11}><path d="M3 9h4l5-5v16l-5-5H3z" stroke="#333" strokeWidth="1.5"/><path d="M15 8a6 6 0 0 1 0 8M18 5a10 10 0 0 1 0 14" stroke="#333" strokeWidth="1.5"/></S>
          <span>ENG</span>
          <Clock>10:02 AM<br />24/9/2024</Clock>
          <S s={12}><path d="M2 3h20v14H13l-2 5v-5H2z" fill="#1a1a1a"/><path d="M6 7h12M6 11h12" stroke="#ddd"/></S>
        </Tray>
      </Taskbar>
      <SiteMark>KhoBanVe.vn</SiteMark>
      <Copyright>Copyright © KhoBanVe.vn</Copyright>
      <Logo>
        <LogoPlate>
          <LogoWord><LogoSpan $c="#e87a25">KHO</LogoSpan><LogoSpan $c="#2a2a2a">BANVE</LogoSpan></LogoWord>
        </LogoPlate>
        <Roof viewBox="0 0 82 20" fill="none"><path d="M3 18 31 8 46 15 63 2 79 15" stroke="#e87a25" strokeWidth="1.5"/></Roof>
      </Logo>
    </Root>
  );
}
